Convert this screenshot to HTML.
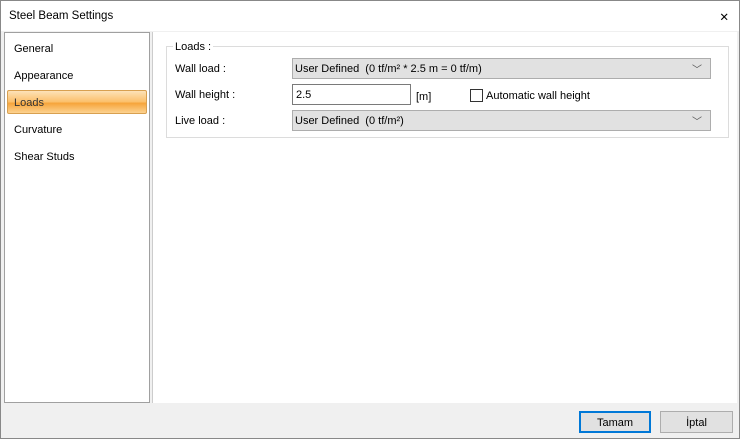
<!DOCTYPE html><html><head><style>
*{margin:0;padding:0;box-sizing:border-box}
body{width:740px;height:439px;background:#f0f0f0;font-family:"Liberation Sans",sans-serif;font-size:11px;color:#000;position:relative;overflow:hidden}
.win{position:absolute;left:0;top:0;width:740px;height:439px;border:1px solid #888;}
.title{position:absolute;left:1px;top:1px;width:738px;height:30px;background:#fff;}
.title span{position:absolute;left:8px;top:9px;font-size:11.5px}
.x{position:absolute;right:10px;top:6px;font-size:16px}
.abs{position:absolute}
.list{left:4px;top:32px;width:146px;height:371px;background:#fff;border:1px solid #a0a0a0}
.item{position:absolute;left:9px;font-size:11px}
.sel{left:2px;top:57px;width:140px;height:24px;border:1px solid #d8a050;border-radius:2px;background:linear-gradient(#fde2b8,#fbbf6a 50%,#f6a43a 55%,#fcd290);}
.right{left:152px;top:32px;width:585px;height:371px;background:#fff;border-left:1px solid #ccc;}
.grp{left:166px;top:46px;width:563px;height:92px;border:1px solid #dcdcdc}
.lbl{font-size:11px}
.combo{background:#e1e1e1;border:1px solid #adadad;height:21px;font-size:11px;padding:4px 0 0 2px}
.combo i{position:absolute;right:8px;top:2px;font-style:normal;color:#555;font-size:10px}
.btn{height:22px;border:1px solid #adadad;background:#e1e1e1;text-align:center;font-size:11px;padding-top:4px}
</style></head><body>
<div class="win"></div>
<div class="title"><span>Steel Beam Settings</span><span class="x" style="left:auto">✕</span></div>
<div class="abs list">
<div class="item" style="top:10px">General</div>
<div class="item" style="top:37px">Appearance</div>
<div class="abs sel"></div>
<div class="item" style="top:64px;color:#333">Loads</div>
<div class="item" style="top:91px">Curvature</div>
<div class="item" style="top:118px">Shear Studs</div>
</div>
<div class="abs right"></div>
<div class="abs grp"></div>
<div class="abs lbl" style="left:173px;top:41px;background:#fff;padding:0 2px">Loads :</div>
<div class="abs lbl" style="left:175px;top:63px">Wall load :</div>
<div class="abs lbl" style="left:175px;top:89px">Wall height :</div>
<div class="abs lbl" style="left:175px;top:115px">Live load :</div>
<div class="abs combo" style="left:292px;top:58px;width:419px">User Defined&nbsp; (0 tf/m² * 2.5 m = 0 tf/m)<i>﹀</i></div>
<div class="abs" style="left:292px;top:84px;width:119px;height:21px;border:1px solid #7a7a7a;background:#fff;padding:4px 0 0 3px;font-size:11px">2.5</div>
<div class="abs lbl" style="left:416px;top:91px">[m]</div>
<div class="abs" style="left:470px;top:89px;width:13px;height:13px;border:1px solid #333;background:#fff"></div>
<div class="abs lbl" style="left:486px;top:90px">Automatic wall height</div>
<div class="abs combo" style="left:292px;top:110px;width:419px">User Defined&nbsp; (0 tf/m²)<i>﹀</i></div>
<div class="abs btn" style="left:579px;top:411px;width:72px;border:2px solid #0078d7">Tamam</div>
<div class="abs btn" style="left:660px;top:411px;width:73px;padding-top:5px">İptal</div>
</body></html>
